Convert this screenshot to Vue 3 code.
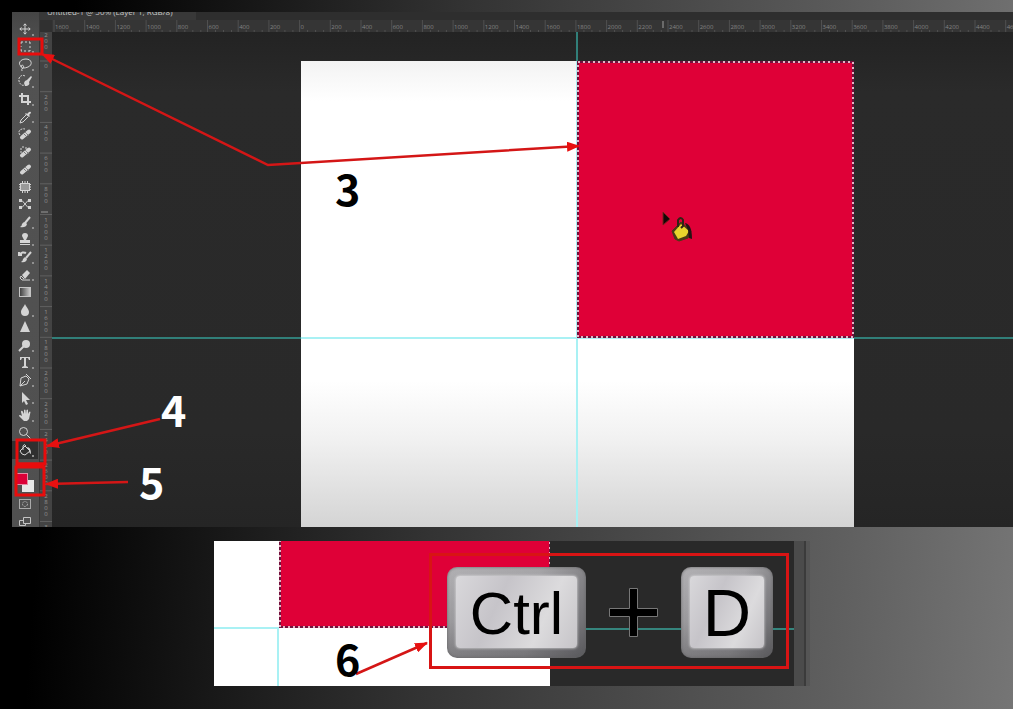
<script setup>
const tools = [
  { name: 'Move', more: true, line: 'M8 3v10M3 8h10M6.5 4.5L8 2.8l1.5 1.7M6.5 11.5L8 13.2l1.5-1.7M4.5 6.5L2.8 8l1.700 1.5M11.5 6.5L13.2 8l-1.700 1.5' },
  { name: 'Rectangular Marquee', more: true, line: 'M4 6V4h2M8 4h2M12 4h1v2M13 8v2M13 12v1h-2M9 13H7M5 13H4v-2M4 9V8' },
  { name: 'Lasso', more: true, line: 'M5 11C0 8 3 3 9 3s7 6 2 8-8 1-7-1 4 0 2 2-1 1-1 3' },
  { name: 'Quick Selection', more: true, line: 'M8 3C5 1 1 4 2 8s4 5 5 4', dash: true, fill: 'M14 3l-4 4-2 1-1 2 1 3c4 0 5-2 4-4l3-5z' },
  { name: 'Crop', more: true, line: 'M5 2v9h9M2 5h9v9', heavy: true },
  { name: 'Eyedropper', more: true, line: 'M9 6l-5 5-1 3 3-1 5-5', fill: 'M8 5l1-1 1 1 2-2q2-1 2 1l-2 2 1 1-1 1z' },
  { name: 'Spot Healing Brush', line: 'M3 9C0 5 4 2 8 3', dash: true, bandage: true },
  { name: 'Remove', line: 'M3 5h2M6 2v2M3 8h2M8 4h2', bandage: true },
  { name: 'Healing Brush', bandage: true },
  { name: 'Patch', patch: true, line: 'M5.500 2v2M8 2v2M10.500 2v2M5.500 12v2M8 12v2M10.500 12v2M2 5.500h2M2 8h2M2 10.500h2M12 5.500h2M12 8h2M12 10.500h2' },
  { name: 'Content-Aware Move', line: 'M2 4.500h3l6 7h3M2 11.500h3l6-7h3', knots: true },
  { name: 'Brush', more: true, line: 'M13 3L8 9', heavy: true, fill: 'M8 8l2 2q-1 4-7 3 2-1 2-3 1-2 3-2z' },
  { name: 'Clone Stamp', more: true, fill: 'M5 5a3 3 0 1 1 6 0L9 9h4v3H3V9h4zM3 13h10v1H3z' },
  { name: 'History Brush', more: true, line: 'M14 3L9 9M3 6c1-3 4-3 6-2M2 3v3h3', heavy: true, fill: 'M8 8l2 2q-1 4-6 3 2-1 2-3z' },
  { name: 'Eraser', more: true, line: 'M4 9l3 3M4 9l-1 2 2 2h8', fill: 'M5 8l5-5 3 3-5 6z' },
  { name: 'Gradient', gradient: true },
  { name: 'Blur', more: true, fill: 'M8 2c1 3 4 5 4 8a4 4 0 0 1-8 0c0-3 3-5 4-8z' },
  { name: 'Sharpen', fill: 'M8 2l5 11H3z' },
  { name: 'Dodge', more: true, line: 'M7 9l-5 5', heavy: true, fill: 'M5 7a4 4 0 1 1 8 0 4 4 0 0 1-8 0z' },
  { name: 'Type', more: true, fill: 'M3 3h10v3h-1l-1-2H9v8l2 1v1H5v-1l2-1V4H5L4 6H3z' },
  { name: 'Pen', more: true, line: 'M3 14l1-8 5-2 3 3-2 5-7 2 5-5M9 2l5 5' },
  { name: 'Path Selection', more: true, fill: 'M5 2l8 8H9l2 4-2 1-2-4-2 2z' },
  { name: 'Hand', more: true, fill: 'M5 9L4 5q0-2 1.500-1L7 7V3q1-1 1.500 0L9 7l.5-4q1-1 1.500 0v4l1-2q1-1 1.500 0L12 12l-2 2H7L2 9q0-2 3 0z' },
  { name: 'Zoom', line: 'M2.500 6.500a4 4 0 1 0 8 0 4 4 0 0 0-8 0M9.500 9.500l4 4' },
  { name: 'Paint Bucket', more: true, active: true, line: 'M3 9l5-5 5 5-5 4-3-1zM6 8V4q1-3 3 0', fill: 'M10 5q4 0 4 7-2-1-2-4z' },
]

const pitch = 30.7
const topMarks = Array.from({ length: 32 }, (_, i) => ({
  x: 2 + i * pitch,
  label: String(Math.abs(i - 8) * 200),
}))
const sideMarks = Array.from({ length: 17 }, (_, i) => ({
  y: 29 + (i - 1) * pitch,
  digits: String(Math.abs(i - 1) * 200).split(''),
}))
</script>

<template>
  <main class="page">
    <section class="editor" aria-label="Image editor">
      <aside class="toolbar">
        <nav class="tools" aria-label="Tools">
          <button v-for="t in tools" :key="t.name" type="button" class="tool" :class="{ active: t.active, more: t.more }" :aria-label="t.name">
            <svg viewBox="0 0 16 16" width="16" height="16" aria-hidden="true">
              <path v-if="t.fill" :d="t.fill" fill="currentColor" />
              <path v-if="t.line" :d="t.line" fill="none" stroke="currentColor" :stroke-width="t.heavy ? 2 : 1" :stroke-dasharray="t.dash ? '2 1' : 'none'" />
              <g v-if="t.bandage" fill="none" stroke-linecap="round">
                <path d="M5 11.500L12 5.500" stroke="currentColor" stroke-width="4" />
                <path d="M7 8l3 3M8.500 6.500l3 3" stroke="#777" stroke-dasharray="1 1" />
              </g>
              <rect v-if="t.patch" x="3.500" y="4.500" width="9" height="7" fill="#999" stroke="currentColor" />
              <path v-if="t.knots" d="M2 3h3v3H2zM11 3h3v3h-3zM2 10h3v3H2zM11 10h3v3h-3z" fill="currentColor" />
              <g v-if="t.gradient">
                <linearGradient id="toolGrad"><stop offset="0" stop-color="#3a3a3a" /><stop offset="1" stop-color="#d0d0d0" /></linearGradient>
                <rect x="2.500" y="3.500" width="11" height="9" fill="url(#toolGrad)" stroke="#c4c4c4" />
              </g>
            </svg>
          </button>
        </nav>
        <svg class="swatches" width="26" height="24" viewBox="0 0 26 24" role="img" aria-label="Foreground and background colours">
          <rect x="10" y="9" width="12" height="12" fill="#e8e8e8" />
          <rect x="4.500" y="2.500" width="11" height="11" fill="#dc0037" stroke="#e58ba3" />
        </svg>
        <button type="button" class="mode" aria-label="Quick Mask">
          <svg width="14" height="12" viewBox="0 0 14 12"><rect x="1.500" y="1.500" width="11" height="9" fill="none" stroke="#aaa" /><circle cx="7" cy="6" r="2.500" fill="none" stroke="#aaa" stroke-dasharray="2 1" /></svg>
        </button>
        <button type="button" class="mode screen" aria-label="Screen Mode">
          <svg width="14" height="12" viewBox="0 0 14 12"><path d="M5.500 8.500v-6h7v6zM5 5.500H1.500v5h6V9" fill="none" stroke="#c4c4c4" /></svg>
        </button>
      </aside>
      <header class="tabs"><span class="tab">Untitled-1 @ 50% (Layer 1, RGB/8)</span></header>
      <svg class="ruler-top" aria-hidden="true">
        <g v-for="m in topMarks" :key="m.x">
          <path :d="`M${m.x} 0v12m8-2v2m8-2v2m8-2v2`" stroke="#505050" fill="none" />
          <text :x="m.x + 1" y="9">{{ m.label }}</text>
        </g>
        <path d="M611 1v7" stroke="#a0a0a0" />
      </svg>
      <svg class="ruler-side" aria-hidden="true">
        <g v-for="m in sideMarks" :key="m.y">
          <path :d="`M0 ${m.y}h12`" stroke="#606060" />
          <text v-for="(d, i) in m.digits" :key="i" x="6" :y="m.y + 7 + i * 6">{{ d }}</text>
        </g>
        <path d="M1 180h7" stroke="#999" />
      </svg>
      <div class="canvas">
        <div class="guide-h"></div>
        <div class="guide-v"></div>
        <div class="document">
          <div class="quarter"></div>
          <div class="quarter red">
            <svg class="ants" aria-hidden="true"><rect class="under" x="1" y="1" width="275" height="275" /><rect class="dash" x="1" y="1" width="275" height="275" /></svg>
            <svg class="cursor" width="32" height="32" viewBox="0 0 32 32" aria-hidden="true">
              <path d="M1 1v13l7-6z" fill="#160606" stroke="#7a201c" />
              <path d="M10 20l9-9 10 9-3 7-9 3-4-2z" fill="#4a3a14" stroke="#4a3a14" stroke-linejoin="round" />
              <path d="M12 21l7-8 8 7-3 5-8 3z" fill="#e8d42c" />
              <path d="M16 16V9q3-4 5 0v6l-2 2" fill="none" stroke="#302414" stroke-width="2" />
              <path d="M23 12q7 1 7 16l-3-1-1-8z" fill="#241414" />
            </svg>
          </div>
        </div>
      </div>
    </section>

    <section class="shortcut" aria-label="Deselect shortcut">
      <div class="preview">
        <div class="white"></div>
        <div class="red">
          <svg class="ants" aria-hidden="true"><rect class="under" x="1" y="-4" width="270" height="90" /><rect class="dash" x="1" y="-4" width="270" height="90" /></svg>
        </div>
        <div class="guide-corner"></div>
        <div class="below"></div>
      </div>
      <div class="rest"></div>
      <div class="scroll"></div>
      <div class="combo">
        <kbd class="key wide"><span>Ctrl</span></kbd>
        <svg width="51" height="51" viewBox="0 0 51 51" role="img" aria-label="plus"><path d="M21.500 1.500h8v20h20v8h-20v20h-8v-20h-20v-8h20z" fill="#000" stroke="#777" /></svg>
        <kbd class="key"><span>D</span></kbd>
      </div>
    </section>

    <svg class="notes">
      <defs>
        <marker id="head" markerUnits="userSpaceOnUse" markerWidth="14" markerHeight="10" refX="12" refY="5" orient="auto-start-reverse">
          <path d="M0 0l13 5-13 5z" fill="#e81010" />
        </marker>
      </defs>
      <g fill="none" stroke="#e80c0c" stroke-width="3">
        <rect x="19" y="39" width="23" height="15" />
        <rect x="17" y="440" width="28" height="24" />
        <rect x="16" y="467" width="28" height="28" />
        <path d="M16 465h28" stroke-width="5" />
      </g>
      <g fill="none" stroke="#d41616" stroke-width="2.500">
        <path d="M42 54l226 111 311-19" marker-start="url(#head)" marker-end="url(#head)" />
        <path d="M160 419L47 446" marker-end="url(#head)" />
        <path d="M128 482l-82 2" marker-end="url(#head)" />
        <path d="M356 674l71-31" marker-end="url(#head)" />
      </g>
      <text x="335" y="206">3</text>
      <text x="161" y="427" class="light">4</text>
      <text x="139" y="499" class="light">5</text>
      <text x="335" y="676">6</text>
    </svg>
  </main>
</template>

<style>
body { margin: 0; background: #000; }
</style>

<style scoped>
.page {
  position: relative;
  box-sizing: border-box;
  min-height: 100vh;
  padding: 12px 0 24px 12px;
  overflow: hidden;
  background: linear-gradient(94deg, #000 7%, #333 44%, #5e5e5e 82%, #757575 100%);
  font-family: "Open Sans", "Noto Sans", sans-serif;
}
.editor {
  display: grid;
  grid-template-columns: 28px 12px 1fr;
  grid-template-rows: 8px 12px 495px;
  background: #303030;
}
.toolbar {
  grid-row: 1 / 4;
  display: flex;
  flex-direction: column;
  overflow: hidden;
  box-sizing: border-box;
  padding: 8px 1px 0 0;
  border-right: 1px solid #383838;
  background: linear-gradient(#454545, #525252 40px, #505050);
}
.tools { flex: none; display: grid; grid-auto-rows: 1fr; height: 439px; }
button { border: 0; padding: 0; background: none; color: #d4d4d4; }
.tool { position: relative; display: flex; align-items: center; justify-content: center; min-height: 0; }
.tool.active { background: #303030; }
.tool.more::after {
  content: "";
  position: absolute;
  right: 4px;
  bottom: 2px;
  width: 2px;
  height: 2px;
  background: #909090;
}
.swatches { flex: none; margin-top: 12px; }
.mode { flex: none; display: flex; align-items: center; justify-content: center; height: 18px; }
.mode.screen { height: 14px; align-items: flex-end; }
.tabs { grid-column: 2 / 4; overflow: hidden; background: #2e2e2e; }
.tab {
  display: block;
  box-sizing: border-box;
  width: 156px;
  height: 8px;
  padding-left: 7px;
  background: #383838;
  color: #c8c8c8;
  font-size: 8px;
  line-height: 0;
  white-space: nowrap;
}
.ruler-top { grid-column: 3; width: 100%; height: 12px; background: #353535; }
.ruler-top text { fill: #848484; font-size: 6px; }
.ruler-side { grid-column: 2; grid-row: 3; width: 12px; height: 495px; background: #434343; }
.ruler-side text { fill: #949494; font-size: 6px; text-anchor: middle; }
.canvas {
  position: relative;
  grid-column: 3;
  box-sizing: border-box;
  overflow: hidden;
  padding: 29px 0 0 249px;
  background: linear-gradient(#232323, #2a2a2a 60px, #292929 400px, #252525);
}
.guide-h { position: absolute; left: 0; right: 0; top: 305px; height: 2px; background: #317f79; }
.guide-v { position: absolute; left: 524px; top: 0; width: 2px; height: 29px; background: #317f79; }
.document {
  position: relative;
  display: grid;
  grid-template: 277px 189px / 276px 277px;
  width: 553px;
  background: linear-gradient(#f3f3f3, #fff 40px, #fff 320px, #f2f2f2 375px, #d4d4d4);
}
.document::before, .document::after { content: ""; position: absolute; background: #a9f1f4; }
.document::before { left: 0; right: 0; top: 276px; height: 2px; }
.document::after { left: 275px; top: 0; width: 2px; bottom: 0; }
.red { position: relative; z-index: 1; background: #df0037; }
.ants { display: block; width: 100%; height: 100%; overflow: visible; }
.ants rect { fill: none; stroke-width: 2; }
.ants .under { stroke: #73103c; }
.ants .dash { stroke: #e3b6c6; stroke-dasharray: 2 3; }
.cursor { position: absolute; left: 85px; top: 150px; }
.shortcut {
  position: relative;
  display: grid;
  grid-template-columns: 336px 244px 16px;
  width: 596px;
  height: 145px;
  margin: 14px 0 0 202px;
}
.preview { display: grid; grid-template: 86px 59px / 65px 271px; overflow: hidden; background: #fff; }
.guide-corner { border-top: 2px solid #a9f1f4; border-right: 2px solid #a9f1f4; }
.rest { background: linear-gradient(#292929 87px, #35857d 87px, #35857d 89px, #292929 89px); }
.scroll { background: linear-gradient(90deg, #4b4b4b 10px, #3b3b3b 10px, #3b3b3b 12px, #555 12px); }
.combo {
  position: absolute;
  z-index: 2;
  left: 215px;
  top: 12px;
  box-sizing: border-box;
  display: flex;
  align-items: center;
  justify-content: space-between;
  width: 360px;
  height: 116px;
  padding: 2px 13px 0 15px;
  border: 3px solid #d81414;
}
.key {
  box-sizing: border-box;
  display: flex;
  width: 92px;
  height: 91px;
  padding: 9px 9px 10px;
  border-radius: 10px;
  background: linear-gradient(100deg, #b8b7ba55, #99989b55 60%, #50505488), linear-gradient(#aeadb0, #8e8d90 60%, #626164);
  box-shadow: inset 0 0 3px #606062;
  font-family: "Liberation Sans", Arial, sans-serif;
  font-size: 67px;
  line-height: 74px;
  color: #000;
}
.key.wide { width: 139px; font-size: 60px; line-height: 75px; }
.key span {
  flex: 1;
  border-radius: 4px;
  background: linear-gradient(115deg, #d9d8db, #c6c4c9 35%, #dcdbdd 70%, #c6c4c8);
  box-shadow: 0 0 3px #e6e6e8;
  text-align: center;
}
.notes { position: absolute; z-index: 3; left: 0; top: 0; width: 100%; height: 100%; pointer-events: none; }
.notes text { font-family: "Noto Sans CJK SC", "Open Sans", sans-serif; font-size: 43px; font-weight: 700; fill: #000; }
.notes .light { fill: #fff; }
</style>
